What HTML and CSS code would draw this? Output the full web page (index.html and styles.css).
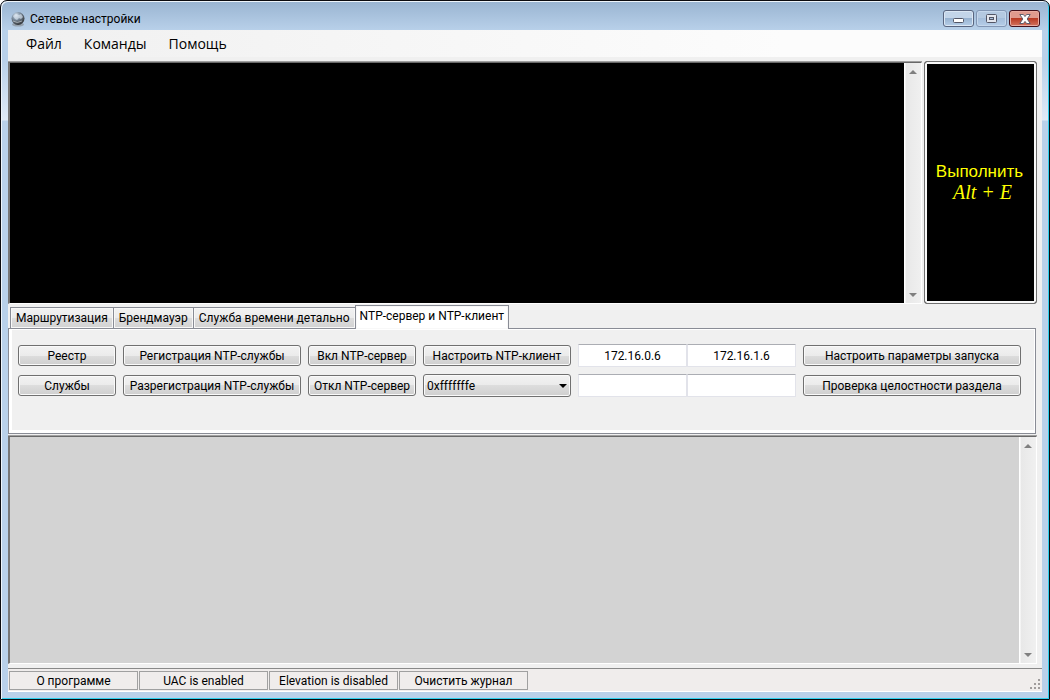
FILE: index.html
```html
<!DOCTYPE html>
<html lang="ru">
<head>
<meta charset="utf-8">
<title>Сетевые настройки</title>
<link rel="stylesheet" href="styles.css">
</head>
<body>
<div class="window">
  <header class="titlebar">
    <svg class="app-icon" viewBox="0 0 16 16" aria-hidden="true">
      <defs>
        <radialGradient id="globe" cx="35%" cy="25%" r="75%">
          <stop offset="0" stop-color="#dce8f2"/>
          <stop offset=".4" stop-color="#8496a8"/>
          <stop offset="1" stop-color="#35383c"/>
        </radialGradient>
      </defs>
      <ellipse cx="8" cy="13.5" rx="6" ry="2" fill="#777" opacity=".5"/>
      <circle cx="8" cy="7.5" r="6.5" fill="url(#globe)"/>
      <path d="M3 5l3-2 3 1 2-1 2 3-2 2-2-1-2 2-2-1z" fill="#d8e4ee" opacity=".65"/>
      <path d="M3 10q4 3 9 0" fill="none" stroke="#c2c8cc" opacity=".7"/>
    </svg>
    <h1 class="title">Сетевые настройки</h1>
    <div class="window-buttons">
      <button class="win-btn" type="button" aria-label="Свернуть">
        <svg width="11" height="5" viewBox="0 0 11 5"><rect x=".5" y=".5" width="10" height="4" rx="1" fill="#fff" stroke="#535666"/></svg>
      </button>
      <button class="win-btn win-btn-dim" type="button" aria-label="Развернуть">
        <svg width="11" height="9" viewBox="0 0 11 9"><rect x=".5" y=".5" width="10" height="8" rx="1" fill="#e3e6ee" stroke="#535666"/><rect x="3.5" y="3.5" width="4" height="2" fill="#a9c0dc" stroke="#535666"/></svg>
      </button>
      <button class="win-btn win-btn-close" type="button" aria-label="Закрыть">
        <svg width="12" height="10" viewBox="0 0 12 10"><path d="M.8.5h3.600L6 2.600 7.600.5h3.600L8.200 5l3 4.500H7.600L6 7.400 4.400 9.500H.8L3.800 5z" fill="#fff" stroke="#535666" stroke-width=".9"/></svg>
      </button>
    </div>
  </header>

  <main class="client">
    <nav class="menu">
      <button type="button">Файл</button>
      <button type="button">Команды</button>
      <button type="button">Помощь</button>
    </nav>

    <section class="top">
      <div class="box console">
        <textarea class="area" aria-label="Команды"></textarea>
        <div class="scroll">
          <svg class="arrow" viewBox="0 0 8 4"><path d="M0 4h8L4 0z"/></svg>
          <svg class="arrow" viewBox="0 0 8 4"><path d="M0 0h8L4 4z"/></svg>
        </div>
      </div>
      <button class="execute" type="button"><span>Выполнить</span><span class="shortcut">Alt + E</span></button>
    </section>

    <div class="tabs" role="tablist">
      <button class="tab" type="button" role="tab">Маршрутизация</button>
      <button class="tab" type="button" role="tab">Брендмауэр</button>
      <button class="tab" type="button" role="tab">Служба времени детально</button>
      <button class="tab active" type="button" role="tab" aria-selected="true">NTP-сервер и NTP-клиент</button>
    </div>

    <section class="panel" role="tabpanel">
      <div class="controls">
        <button class="btn" type="button">Реестр</button>
        <button class="btn" type="button">Регистрация NTP-службы</button>
        <button class="btn" type="button">Вкл NTP-сервер</button>
        <button class="btn" type="button">Настроить NTP-клиент</button>
        <div class="addresses">
          <input type="text" value="172.16.0.6" aria-label="Адрес 1">
          <input type="text" value="172.16.1.6" aria-label="Адрес 2">
        </div>
        <button class="btn" type="button">Настроить параметры запуска</button>

        <button class="btn" type="button">Службы</button>
        <button class="btn" type="button">Разрегистрация NTP-службы</button>
        <button class="btn" type="button">Откл NTP-сервер</button>
        <div class="select-wrap">
          <select class="btn" aria-label="Флаг"><option>0xfffffffe</option></select>
          <svg class="select-arrow" viewBox="0 0 8 4"><path d="M0 0h8L4 4z"/></svg>
        </div>
        <div class="addresses">
          <input type="text" aria-label="Адрес 3">
          <input type="text" aria-label="Адрес 4">
        </div>
        <button class="btn" type="button">Проверка целостности раздела</button>
      </div>
    </section>

    <section class="box log">
      <textarea class="area" aria-label="Журнал" readonly></textarea>
      <div class="scroll">
        <svg class="arrow" viewBox="0 0 8 4"><path d="M0 4h8L4 0z"/></svg>
        <svg class="arrow" viewBox="0 0 8 4"><path d="M0 0h8L4 4z"/></svg>
      </div>
    </section>

    <footer class="status">
      <button type="button">О программе</button>
      <button type="button">UAC is enabled</button>
      <button type="button">Elevation is disabled</button>
      <button type="button">Очистить журнал</button>
      <svg class="grip" viewBox="0 0 10 10" aria-hidden="true"><path d="M8 0h2v2H8zM4 4h2v2H4zM8 4h2v2H8zM0 8h2v2H0zM4 8h2v2H4zM8 8h2v2H8z" fill="#a09c9c"/></svg>
    </footer>
  </main>
</div>
</body>
</html>
```
FILE: styles.css
```css
* { box-sizing: border-box; }

body {
  margin: 0;
  background: #fff;
  color: #000;
  font: 12px/16px Roboto, "Noto Sans", sans-serif;
}

button, input, select, textarea { font: inherit; color: inherit; margin: 0; }
button { white-space: nowrap; }

.window {
  display: flex;
  flex-direction: column;
  min-height: 100vh;
  padding: 0 7px 7px 6px;
  border: 1px solid #0b0b0f;
  border-radius: 7px 7px 0 0;
  box-shadow: inset 1px 1px 0 #eef5fb, inset -1px -1px 0 #2fd0ee;
  background: linear-gradient(#99b4d1 0, #b9d1ea 30px, #b9d1ea 60px, #dfeaf6 119px, #b9d1ea 120px);
}

.titlebar {
  display: flex;
  align-items: center;
  height: 29px;
  padding: 6px 2px 0 3px;
}
.app-icon { width: 16px; height: 16px; }
.title { flex: 1; margin: 0 0 0 4px; font-size: 12px; font-weight: 400; }
.window-buttons { display: flex; gap: 2px; }
.win-btn {
  display: flex;
  align-items: center;
  justify-content: center;
  width: 31px;
  height: 17px;
  padding: 0;
  border: 1px solid #59657f;
  border-radius: 3px;
  box-shadow: inset 0 0 0 1px #dbe7f4;
  background: linear-gradient(#c3d5e9 50%, #98b3d1 50%, #b6cee8);
}
.win-btn:first-child { padding-top: 4px; }
.win-btn-dim {
  border-color: #8296b4;
  box-shadow: inset 0 0 0 1px #c5d7ec;
  background: linear-gradient(#b4c9e1 50%, #a5bedb 50%, #b5cde8);
}
.win-btn-close {
  border-color: #43101b;
  box-shadow: inset 0 0 0 1px #e9aaa0;
  background: linear-gradient(#e09a8e 45%, #b93a24 50%, #d3735f);
}

.client {
  flex: 1;
  display: flex;
  flex-direction: column;
  margin-left: 1px;
  background: #f0f0f0;
}

.menu {
  display: flex;
  gap: 22px;
  height: 27px;
  margin-bottom: 4px;
  padding: 0 18px;
  background: linear-gradient(90deg, #f0f0f0, #fcfcfc 75%);
}
.menu button {
  padding: 1px 0 0;
  border: 0;
  background: none;
  font: 14px/20px "Open Sans", "Noto Sans", sans-serif;
}

.top { display: flex; gap: 2px; height: 243px; padding-right: 5px; }

.box {
  display: flex;
  border: 1px solid #fff;
  border-top-color: #696969;
  border-left: 2px solid #777;
  box-shadow: 0 -1px 0 #a0a0a0;
}
.area {
  flex: 1;
  min-width: 0;
  padding: 2px;
  border: 0;
  outline: 0;
  resize: none;
  background: #000;
  color: #fff;
}
.console { flex: 1; }
.scroll {
  display: flex;
  flex-direction: column;
  align-items: center;
  justify-content: space-between;
  width: 17px;
  padding: 7px 0 6px;
  background: linear-gradient(90deg, #fff 1px, #e8e8e8 2px, #f0f0f0);
}
.arrow { width: 8px; height: 4px; fill: #808080; }

.execute {
  display: flex;
  flex-direction: column;
  align-items: center;
  justify-content: center;
  flex: 0 0 113px;
  padding: 0 2px 1px 0;
  border: 1px solid #707070;
  border-radius: 3px;
  box-shadow: inset 0 0 0 2px #f8f8f8;
  background: #000;
  color: #ff0;
  font: 17px/20px "Liberation Sans", Arial, sans-serif;
}
.shortcut {
  padding-left: 6px;
  font-family: "Monotype Corsiva", "Liberation Serif", serif;
  font-size: 20px;
  font-style: italic;
}

.tabs {
  display: flex;
  align-items: flex-end;
  height: 24px;
  padding-left: 2px;
}
.tab {
  height: 21px;
  padding: 0 5px;
  border: 1px solid #898c95;
  border-bottom: 0;
  box-shadow: inset 0 0 0 1px #f8f8f8;
  background: linear-gradient(#f2f2f2, #ebebeb 50%, #dddddd 50%, #d2d2d2);
}
.tab + .tab { margin-left: -1px; }
.tab.active {
  position: relative;
  height: 24px;
  margin-bottom: -1px;
  padding: 0 4px 3px;
  background: #fff;
}

.panel {
  height: 106px;
  margin-right: 6px;
  padding: 15px 14px 0 9px;
  border: 1px solid #898c95;
  box-shadow: inset 3px -3px 0 #fff, inset -1px 1px 0 #fff;
}
.controls {
  display: grid;
  grid-template-columns: minmax(0, 98fr) minmax(0, 178fr) minmax(0, 108fr) minmax(0, 148fr) minmax(0, 218fr) minmax(0, 218fr);
  grid-auto-rows: 23px;
  gap: 7px;
  align-items: center;
}
.btn {
  min-width: 0;
  height: 21px;
  padding: 0;
  border: 1px solid #707070;
  border-radius: 3px;
  box-shadow: inset 0 0 0 1px #fafafa;
  background: linear-gradient(#f2f2f2, #ebebeb 50%, #dddddd 50%, #cfcfcf);
}
.select-wrap { position: relative; display: flex; }
select.btn {
  width: 100%;
  height: 23px;
  padding: 0 16px 0 3px;
  appearance: none;
}
.select-arrow {
  position: absolute;
  top: 10px;
  right: 4px;
  width: 8px;
  height: 4px;
  pointer-events: none;
}
.addresses { display: flex; }
.addresses input {
  flex: 1;
  min-width: 0;
  height: 23px;
  padding: 0;
  border: 1px solid #e2e3ea;
  border-top-color: #abadb3;
  border-radius: 1px;
  background: #fff;
  text-align: center;
}

.top .box { margin-top: 1px; }
.log { flex: 1; margin: 2px 5px 4px 0; }
.log .area { background: #d3d3d3; color: #000; }

.status {
  display: flex;
  align-items: center;
  gap: 1px;
  height: 24px;
  padding: 1px 2px 1px 1px;
  border-top: 1px solid #898989;
  border-bottom: 1px solid #fff;
  background: #f0edec;
}
.status button {
  width: 129px;
  height: 19px;
  padding: 1px 0 0;
  border: 1px solid #a0a0a0;
  background: none;
  line-height: 16px;
}
.grip { width: 10px; height: 10px; margin: 8px 0 0 auto; }
```
